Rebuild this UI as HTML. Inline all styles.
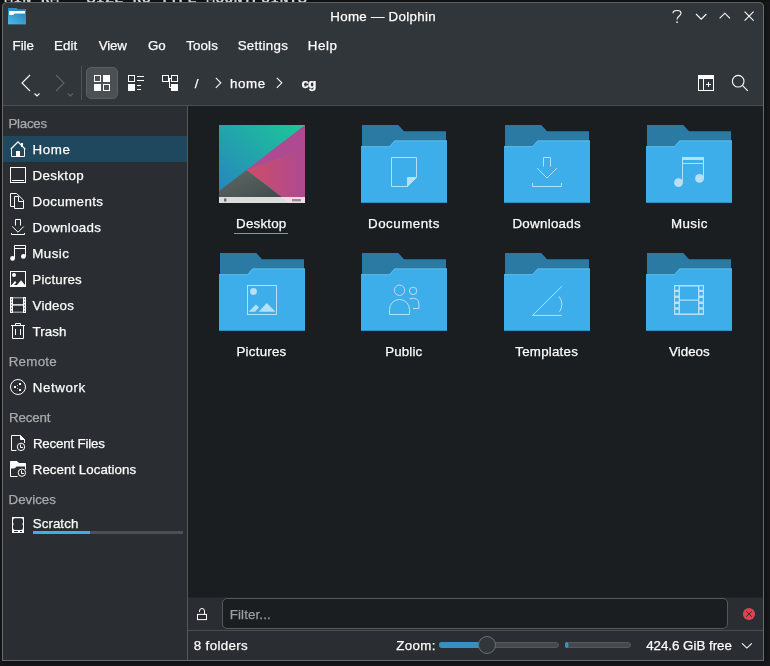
<!DOCTYPE html>
<html>
<head>
<meta charset="utf-8">
<title>Home — Dolphin</title>
<style>
html,body{margin:0;padding:0;}
body{width:770px;height:666px;overflow:hidden;background:#17191a;position:relative;font-family:"Liberation Sans",sans-serif;font-size:13.33px;color:#fcfcfc;}
.abs{position:absolute;}
.t,.lbl{-webkit-text-stroke:0.25px currentColor;}
.t{position:absolute;white-space:nowrap;line-height:16px;height:16px;margin-top:1px;}
#term{position:absolute;left:0;top:0;width:770px;height:2px;overflow:hidden;background:#131516;will-change:transform;}
#term span{position:absolute;left:4px;top:-9.4px;font-family:"Liberation Mono",monospace;font-size:15.3px;line-height:16px;color:#ffffff;font-weight:bold;white-space:pre;}
#win{position:absolute;left:2px;top:2px;width:762px;height:659px;background:#2a2e32;border-radius:5px 5px 0 0;box-shadow:0 1px 8px 1px rgba(0,0,0,0.45);overflow:hidden;}
#frame{position:absolute;left:2px;top:2px;width:760px;height:657px;border:1px solid #676b6f;border-top-color:#5a5f64;border-radius:5px 5px 0 0;pointer-events:none;}
#header{position:absolute;left:0;top:0;width:762px;height:103px;background:#31363b;}
#hsep{position:absolute;left:0;top:103px;width:762px;height:1px;background:#4a4e52;}
#side{position:absolute;left:1px;top:104px;width:184px;height:555px;background:#2a2e32;}
#vsep{position:absolute;left:185px;top:104px;width:1px;height:555px;background:#54585c;}
#view{position:absolute;left:186px;top:104px;width:576px;height:491px;background:#1b1e20;border-bottom:1px solid #222528;}
#fbar{position:absolute;left:186px;top:596px;width:576px;height:32px;background:#2a2e32;}
#ssep{position:absolute;left:186px;top:628px;width:576px;height:1px;background:#4a4e52;}
.menu{top:35px;}
.dim{color:#a8aaab;}
.row{position:absolute;left:1px;width:184px;height:26px;}
.lbl{position:absolute;white-space:nowrap;line-height:16px;height:16px;text-align:center;width:140px;margin-top:1px;}
svg{position:absolute;overflow:visible;}
</style>
</head>
<body>
<div id="term"><span>MIN RM   SIZE RO TYPE MOUNTPOINTS</span></div>
<div id="win">
  <div id="header"></div>
  <div id="hsep"></div>
  <div id="side"></div>
  <div id="vsep"></div>
  <div id="view"></div>
  <div id="fbar"></div>
  <div id="ssep"></div>
</div>
<div id="frame"></div>

<!-- coordinates below are absolute page coords -->
<div id="ui" class="abs" style="left:0;top:0;width:770px;height:666px;will-change:transform;">

<!-- titlebar -->
<svg style="left:8px;top:7.7px" width="18" height="17" viewBox="0 0 18 17">
  <defs><linearGradient id="fg" x1="0" y1="1" x2="1" y2="0.2"><stop offset="0" stop-color="#50b8ea"/><stop offset="1" stop-color="#2f8cc0"/></linearGradient></defs>
  <path d="M0 0 H8.6 L9.8 1.2 H18 V16.3 H0 Z" fill="#2d8ec4"/>
  <path d="M1.1 2.9 H17 V5.8 H6.5 L5.4 7.2 H1.1 Z" fill="#fcfcfc"/>
  <path d="M0 7 H5.6 L6.6 5.7 H18 V16.3 H0 Z" fill="url(#fg)"/>
</svg>
<div class="t" style="left:330.3px;top:8px;letter-spacing:0.29px;">Home — Dolphin</div>
<svg style="left:668px;top:7px" width="92" height="18" viewBox="668 7 92 18" fill="none" stroke="#fcfcfc" stroke-width="1.1">
  <path d="M673 13.3 C673 9.6 681 9.6 681 13.3 C681 16 677 16 677 19.6"/>
  <rect x="676.3" y="21.4" width="1.5" height="1.5" fill="#fcfcfc" stroke="none"/>
  <path d="M696 14 L701.2 19.2 L706.4 14"/>
  <path d="M719.6 18.4 L724.8 13.2 L730 18.4"/>
  <path d="M744.6 11.6 L753.6 20.6 M753.6 11.6 L744.6 20.6"/>
</svg>

<!-- menubar -->
<div class="t menu" style="left:12.6px;top:37px;letter-spacing:-0.06px;">File</div>
<div class="t menu" style="left:54.1px;top:37px;letter-spacing:0.02px;">Edit</div>
<div class="t menu" style="left:98.7px;top:37px;letter-spacing:-0.12px;">View</div>
<div class="t menu" style="left:148.0px;top:37px;letter-spacing:-0.17px;">Go</div>
<div class="t menu" style="left:186.2px;top:37px;letter-spacing:0.13px;">Tools</div>
<div class="t menu" style="left:237.7px;top:37px;letter-spacing:0.28px;">Settings</div>
<div class="t menu" style="left:307.8px;top:37px;letter-spacing:0.57px;">Help</div>

<!-- toolbar -->
<svg style="left:0;top:60px" width="770" height="46" viewBox="0 60 770 46" fill="none">
  <path d="M30 75 L22 83 L30 91" stroke="#fcfcfc" stroke-width="1.1"/>
  <path d="M34.5 93.5 L37 96 L39.5 93.5" stroke="#fcfcfc" stroke-width="1.1"/>
  <path d="M56 75 L64 83 L56 91" stroke="#5f6469" stroke-width="1.1"/>
  <path d="M68 93.5 L70.5 96 L73 93.5" stroke="#5f6469" stroke-width="1.1"/>
  <rect x="81" y="66" width="1" height="34" fill="#4d5257"/>
  <rect x="86.5" y="67.5" width="31" height="31" rx="4.5" fill="#4b5055" stroke="#5b6065"/>
  <!-- icons grid -->
  <g fill="#fcfcfc">
    <path d="M94 75h7v7h-7z M95 76v5h5v-5z" fill-rule="evenodd"/>
    <rect x="103" y="75" width="7" height="7"/>
    <rect x="94" y="84" width="7" height="7"/>
    <path d="M103 84h7v7h-7z M104 85v5h5v-5z" fill-rule="evenodd"/>
  </g>
  <!-- compact -->
  <g fill="#fcfcfc">
    <path d="M128 75h7v7h-7z M129 76v5h5v-5z" fill-rule="evenodd"/>
    <rect x="128" y="84" width="7" height="7"/>
    <rect x="137" y="76" width="7" height="1"/>
    <rect x="137" y="80" width="7" height="1"/>
    <rect x="137" y="85" width="4" height="1"/>
    <rect x="137" y="89" width="4" height="1"/>
  </g>
  <!-- tree -->
  <g fill="#fcfcfc">
    <path d="M162 75h7v7h-7z M163 76v5h5v-5z" fill-rule="evenodd"/>
    <path d="M171 75h7v7h-7z M172 76v5h5v-5z" fill-rule="evenodd"/>
    <rect x="171" y="84" width="7" height="7"/>
    <rect x="169" y="78" width="2" height="1"/>
    <rect x="169" y="78" width="1" height="10"/>
    <rect x="169" y="87" width="2" height="1"/>
  </g>
  <!-- breadcrumb arrows -->
  <path d="M215.8 77.8 L220.8 82.8 L215.8 87.8" stroke="#fcfcfc" stroke-width="1.1"/>
  <path d="M276.8 77.8 L281.8 82.8 L276.8 87.8" stroke="#fcfcfc" stroke-width="1.1"/>
  <!-- split view -->
  <g fill="#fcfcfc">
    <path d="M698 75h16v16h-16z M699 79v11h4v-11z M704 79v11h9v-11z" fill-rule="evenodd"/>
    <rect x="708" y="82" width="1" height="5"/>
    <rect x="706" y="84" width="5" height="1"/>
  </g>
  <!-- search -->
  <circle cx="738.2" cy="81.2" r="5.8" stroke="#fcfcfc" stroke-width="1.1"/>
  <path d="M742.6 85.6 L747.8 90.8" stroke="#fcfcfc" stroke-width="1.1"/>
</svg>
<div class="t" style="left:194.8px;top:75px;letter-spacing:0.80px;">/</div>
<div class="t" style="left:230.0px;top:75px;letter-spacing:0.60px;">home</div>
<div class="t" style="left:301.5px;top:75px;font-weight:bold;letter-spacing:-0.59px;">cg</div>

<!-- SIDEBAR -->
<div class="abs" style="left:3px;top:136px;width:184px;height:26px;background:#1f485e;"></div>
<div class="t dim" style="left:8.4px;top:115px;letter-spacing:-0.24px;">Places</div>
<div class="t" style="left:32.4px;top:141px;letter-spacing:0.67px;">Home</div>
<div class="t" style="left:32.4px;top:167px;letter-spacing:0.39px;">Desktop</div>
<div class="t" style="left:32.4px;top:193px;letter-spacing:0.40px;">Documents</div>
<div class="t" style="left:32.5px;top:219px;letter-spacing:0.32px;">Downloads</div>
<div class="t" style="left:32.3px;top:245px;letter-spacing:0.44px;">Music</div>
<div class="t" style="left:32.3px;top:271px;letter-spacing:0.19px;">Pictures</div>
<div class="t" style="left:32.6px;top:297px;letter-spacing:0.14px;">Videos</div>
<div class="t" style="left:32.5px;top:323px;letter-spacing:0.06px;">Trash</div>
<div class="t dim" style="left:8.7px;top:353px;letter-spacing:0.28px;">Remote</div>
<div class="t" style="left:32.8px;top:379px;letter-spacing:0.58px;">Network</div>
<div class="t dim" style="left:9.0px;top:409px;letter-spacing:-0.14px;">Recent</div>
<div class="t" style="left:32.9px;top:435px;letter-spacing:-0.19px;">Recent Files</div>
<div class="t" style="left:32.8px;top:461px;letter-spacing:0.02px;">Recent Locations</div>
<div class="t dim" style="left:8.6px;top:491px;letter-spacing:-0.02px;">Devices</div>
<div class="t" style="left:32.7px;top:515px;letter-spacing:0.07px;">Scratch</div>
<div class="abs" style="left:33px;top:531px;width:150px;height:3px;background:#4b5055;"></div>
<div class="abs" style="left:33px;top:531px;width:57px;height:3px;background:#3daee9;"></div>

<!-- sidebar icons -->
<svg id="sicons" style="left:10px;top:141px" width="16" height="400" viewBox="0 0 16 400" fill="none" stroke="#fcfcfc" stroke-width="1">
  <!-- home (0) -->
  <g>
    <path d="M0.7 8.2 L8 0.9 L15.3 8.2" stroke-width="1.3"/>
    <path d="M1.5 7.5 V15.5 H14.5 V7.5"/>
    <rect x="6" y="10" width="4" height="5.5" fill="#fcfcfc" stroke="none"/>
    <rect x="11" y="2" width="2" height="4" fill="#fcfcfc" stroke="none"/>
  </g>
  <!-- desktop (26) -->
  <g transform="translate(0,26)">
    <rect x="0.5" y="0.5" width="15" height="15"/>
    <path d="M2 13.5 H14"/>
  </g>
  <!-- documents (52) -->
  <g transform="translate(0,52)">
    <path d="M4.5 13.5 H0.5 V0.5 H6.5 L13.5 7.2 V15.5 H4.5 V3.5 H8.5 V8.5 H13.5"/>
  </g>
  <!-- downloads (78) -->
  <g transform="translate(0,78)">
    <path d="M5.5 6.5 V0.5 H10.5 V6.5"/>
    <path d="M2.3 7.5 L8 13.2 L13.7 7.5"/>
    <path d="M1.5 14 V15.5 H14.5 V14"/>
  </g>
  <!-- music (104) -->
  <g transform="translate(0,104)">
    <path d="M4.5 13 V0.5 H15.5 V11"/>
    <path d="M4.5 3.5 H15.5"/>
    <circle cx="2.6" cy="13.4" r="2.4" fill="#fcfcfc" stroke="none"/>
    <circle cx="13.4" cy="11.4" r="2.4" fill="#fcfcfc" stroke="none"/>
  </g>
  <!-- pictures (130) -->
  <g transform="translate(0,130)">
    <rect x="0.5" y="0.5" width="15" height="15"/>
    <circle cx="4" cy="4" r="2" fill="#fcfcfc" stroke="none"/>
    <path d="M7 14 L11 9.2 L15 14 Z" fill="#fcfcfc" stroke="none"/>
    <path d="M1.6 14 L5 10 L6.4 11.4 L4 14 Z" fill="#fcfcfc" stroke="none"/>
    <path d="M1 14.5 H15"/>
  </g>
  <!-- videos (156) -->
  <g transform="translate(0,156)">
    <rect x="0" y="0" width="3" height="16" fill="#fcfcfc" stroke="none"/>
    <rect x="13" y="0" width="3" height="16" fill="#fcfcfc" stroke="none"/>
    <rect x="3" y="0" width="10" height="1.5" fill="#8e9295" stroke="none"/>
    <rect x="3" y="14.5" width="10" height="1.5" fill="#8e9295" stroke="none"/>
    <rect x="3" y="7.2" width="10" height="1.4" fill="#fcfcfc" stroke="none"/>
    <g fill="#6f7376" stroke="none">
      <rect x="1" y="1.5" width="1" height="1.5"/><rect x="1" y="4.5" width="1" height="1.5"/><rect x="1" y="7.5" width="1" height="1.5"/><rect x="1" y="10.5" width="1" height="1.5"/><rect x="1" y="13.5" width="1" height="1.5"/>
      <rect x="14" y="1.5" width="1" height="1.5"/><rect x="14" y="4.5" width="1" height="1.5"/><rect x="14" y="7.5" width="1" height="1.5"/><rect x="14" y="10.5" width="1" height="1.5"/><rect x="14" y="13.5" width="1" height="1.5"/>
    </g>
  </g>
  <!-- trash (182) -->
  <g transform="translate(0,182)">
    <path d="M1 2.5 H15"/>
    <path d="M5.5 2.5 V0.5 H10.5 V2.5"/>
    <path d="M2.5 2.5 V15.5 H13.5 V2.5"/>
    <path d="M5.5 6 V12 M10.5 6 V12"/>
  </g>
  <!-- network (238) -->
  <g transform="translate(0,238)">
    <circle cx="8" cy="8" r="7.5"/>
    <g fill="#fcfcfc" stroke="none">
      <rect x="4" y="7" width="2" height="2"/><rect x="9" y="4" width="2" height="2"/><rect x="9" y="10" width="2" height="2"/>
      <rect x="7" y="6" width="1" height="1" opacity="0.7"/><rect x="7" y="9" width="1" height="1" opacity="0.7"/>
    </g>
  </g>
  <!-- recent files (294) -->
  <g transform="translate(0,294)">
    <path d="M6.5 15.5 H1.5 V0.5 H10.5 L14.5 4.5 V8"/>
    <path d="M10.5 0.5 V4.5 H14.5 Z" fill="#fcfcfc"/>
    <circle cx="11" cy="11.9" r="3.7"/>
    <path d="M10.5 9.6 V12.5 H13" stroke-width="1"/>
  </g>
  <!-- recent locations (320) -->
  <g transform="translate(0,320)">
    <path d="M0.5 0.5 H7 L9 2.5 H15.5 V5 H6.5 L4.5 7 H0.5 Z" fill="#fcfcfc"/>
    <path d="M0.5 6 V15.5 H7.5"/>
    <path d="M15.5 4 V8.5"/>
    <circle cx="11.9" cy="11.7" r="3.7"/>
    <path d="M11.5 9.4 V12.5 H14" stroke-width="1"/>
  </g>
  <!-- scratch (376) -->
  <g transform="translate(0,376)">
    <rect x="2" y="0" width="12" height="16" fill="#fcfcfc" stroke="none"/>
    <path d="M5 1.3 H11 Q13 1.3 13 3.5 V5.8 L12.5 6.5 V7.8 L13 8.5 V10.5 Q13 13 11 13 H5 Q3 13 3 10.5 V8.5 L3.5 7.8 V6.5 L3 5.8 V3.5 Q3 1.3 5 1.3 Z" fill="#2a2e32" stroke="none"/>
    <rect x="4" y="14" width="4" height="1" fill="#2a2e32" stroke="none"/>
    <rect x="10" y="14" width="2" height="1" fill="#2a2e32" stroke="none"/>
  </g>
</svg>

<!-- MAIN VIEW: folders -->
<svg id="folders" style="left:0;top:0" width="770" height="666" viewBox="0 0 770 666">
  <defs>
    <g id="folder">
      <path d="M1 0 H37.3 L43 6.2 H85 V78 H1 Z" fill="#2b7aa3"/>
      <path d="M0 21.2 H28.3 L33.5 15.4 H86 V78 H0 Z" fill="#3daee9"/>
      <path d="M0 21.7 H28.5 L33.7 15.9 H86" fill="none" stroke="#6cc3ef" stroke-width="1" opacity="0.7"/>
      <rect x="0" y="77" width="86" height="1" fill="#2f8fc2"/>
    </g>
    <linearGradient id="teal" x1="0" y1="1" x2="1" y2="0"><stop offset="0" stop-color="#2780c4"/><stop offset="0.5" stop-color="#22a4ab"/><stop offset="1" stop-color="#1cc898"/></linearGradient>
    <linearGradient id="pink" x1="0" y1="0" x2="1" y2="0"><stop offset="0" stop-color="#cf4c66"/><stop offset="1" stop-color="#ad4a92"/></linearGradient>
    <linearGradient id="gray" x1="0" y1="0" x2="1" y2="1"><stop offset="0" stop-color="#5e6b68"/><stop offset="1" stop-color="#414a4a"/></linearGradient>
  </defs>
  <!-- desktop thumb -->
  <g transform="translate(219,125)">
    <rect x="0" y="0" width="86" height="78" fill="url(#teal)"/>
    <path d="M86 0 L86 24 L27.5 45 Z" fill="#ae4a91"/>
    <path d="M27.5 45 L86 23.4 V78 H62.6 V72 Z" fill="url(#pink)"/>
    <path d="M0 66 L27.5 45 L62.6 72 H0 Z" fill="url(#gray)"/>
    <rect x="0" y="72" width="86" height="6" fill="#d9dddc"/>
    <path d="M62.6 72 L70 78 H86 V72 Z" fill="#f1dde7"/>
    <rect x="5" y="73.5" width="2.5" height="3" fill="#6a6e70"/>
    <rect x="73" y="74" width="9" height="2.4" fill="#9a8e96"/>
  </g>
  <use href="#folder" x="361" y="125"/>
  <use href="#folder" x="504" y="125"/>
  <use href="#folder" x="646" y="125"/>
  <use href="#folder" x="219" y="253"/>
  <use href="#folder" x="361" y="253"/>
  <use href="#folder" x="504" y="253"/>
  <use href="#folder" x="646" y="253"/>
  <g fill="none" stroke="#b7dff6" stroke-width="1">
    <!-- documents emblem -->
    <path d="M391.5 157.5 H416.5 V177 L407.5 186.5 H391.5 Z"/>
    <path d="M416.5 177.5 H407.5 V186.5 Z" fill="#b7dff6"/>
    <!-- downloads emblem -->
    <path d="M543.5 166.5 V157.5 H550.5 V166.5"/>
    <path d="M537 168 L547 178 L557 168"/>
    <path d="M532.5 183 V186.5 H561.5 V183"/>
    <!-- music emblem -->
    <path d="M682.5 182 V157.5 H703.5 V178"/>
    <rect x="682" y="157" width="22" height="3" fill="#b7dff6" stroke="none"/>
    <path d="M682.5 163.5 H703.5"/>
    <circle cx="678.5" cy="182.6" r="4.4" fill="#b7dff6" stroke="none"/>
    <circle cx="699.5" cy="178.4" r="4.4" fill="#b7dff6" stroke="none"/>
    <!-- pictures emblem -->
    <rect x="247.5" y="285.5" width="29" height="29"/>
    <circle cx="253.5" cy="291.5" r="3.4" fill="#b7dff6" stroke="none"/>
    <path d="M248.8 311.8 L255.9 304.4 L259 307.5 L255.2 311.8 Z" fill="#b7dff6" stroke="none"/>
    <path d="M258.6 311.8 L266.8 303 L275.5 311.8 Z" fill="#b7dff6" stroke="none"/>
    <!-- public emblem -->
    <circle cx="399.5" cy="290.3" r="5.2"/>
    <path d="M389.5 314.5 V309.5 A10 10 0 0 1 409.5 309.5 V314.5 Z"/>
    <circle cx="413.1" cy="290.9" r="3.7"/>
    <path d="M409.4 298.8 Q418.9 296.5 418.9 304 V308.5 H413"/>
    <!-- templates emblem -->
    <path d="M562 286.2 L532.5 315.4 H562"/>
    <path d="M559 296.3 Q564.5 304 559.5 311.8"/>
    <!-- videos emblem -->
    <g stroke="none" fill="#b7dff6">
      <path fill-rule="evenodd" d="M674 285 h30 v30 h-30 z M680 286.5 v13 h18 v-13 z M680 300.8 v12.7 h18 v-12.7 z
        M675.2 286.3 h3.4 v3.4 h-3.4z M675.2 292.1 h3.4 v3.4 h-3.4z M675.2 298.0 h3.4 v3.4 h-3.4z M675.2 303.9 h3.4 v3.4 h-3.4z M675.2 309.8 h3.4 v3.4 h-3.4z
        M699.4 286.3 h3.4 v3.4 h-3.4z M699.4 292.1 h3.4 v3.4 h-3.4z M699.4 298.0 h3.4 v3.4 h-3.4z M699.4 303.9 h3.4 v3.4 h-3.4z M699.4 309.8 h3.4 v3.4 h-3.4z"/>
    </g>
  </g>
</svg>
<div class="lbl" style="left:191.3px;top:215px;letter-spacing:0.21px;">Desktop</div>
<div class="abs" style="left:234px;top:232.7px;width:54px;height:1.3px;background:#3daee9;"></div>
<div class="lbl" style="left:334.0px;top:215px;letter-spacing:0.49px;">Documents</div>
<div class="lbl" style="left:476.7px;top:215px;letter-spacing:0.28px;">Downloads</div>
<div class="lbl" style="left:619.4px;top:215px;letter-spacing:0.36px;">Music</div>
<div class="lbl" style="left:191.5px;top:343px;letter-spacing:0.23px;">Pictures</div>
<div class="lbl" style="left:333.8px;top:343px;letter-spacing:0.10px;">Public</div>
<div class="lbl" style="left:476.7px;top:343px;letter-spacing:0.23px;">Templates</div>
<div class="lbl" style="left:619.4px;top:343px;letter-spacing:0.05px;">Videos</div>

<!-- filter bar -->
<div class="abs" style="left:222px;top:598px;width:506px;height:31px;box-sizing:border-box;border:1px solid #55595d;border-radius:5px;background:#1b1e20;"></div>
<div class="t" style="left:229.7px;top:606px;color:#9a9ea2;letter-spacing:0.13px;">Filter...</div>
<svg style="left:190px;top:602px" width="24" height="24" viewBox="190 602 24 24" fill="none" stroke="#fcfcfc" stroke-width="1">
  <rect x="197.5" y="614.4" width="9" height="5.2"/>
  <path d="M199.5 612 V611 A2.5 2.5 0 0 1 204.5 611 V614.5"/>
</svg>
<svg style="left:742px;top:607px" width="14" height="14" viewBox="0 0 14 14">
  <circle cx="7" cy="7" r="6.1" fill="#da4453"/>
  <path d="M4.2 4.2 L9.8 9.8 M9.8 4.2 L4.2 9.8" stroke="#2a2e32" stroke-width="1" fill="none"/>
</svg>

<!-- status bar -->
<div class="t" style="left:193.8px;top:637px;letter-spacing:0.34px;">8 folders</div>
<div class="t" style="left:396.2px;top:637px;letter-spacing:0.36px;">Zoom:</div>
<div class="t" style="left:646.2px;top:637px;letter-spacing:-0.02px;">424.6 GiB free</div>
<svg style="left:430px;top:632px" width="330" height="28" viewBox="430 632 330 28" fill="none">
  <rect x="439.5" y="642.5" width="119" height="5" rx="2.5" fill="#45494d" stroke="#54585c"/>
  <rect x="439" y="642" width="48" height="6" rx="3" fill="#3a8ec0"/>
  <circle cx="487" cy="645" r="8.5" fill="#31363b" stroke="#6b6f73"/>
  <rect x="565.5" y="642.5" width="65" height="5" rx="2.5" fill="#45494d" stroke="#54585c"/>
  <rect x="565" y="642" width="3.4" height="6" rx="1.7" fill="#3a8ec0"/>
  <path d="M742 643.3 L746.9 648.1 L751.8 643.3" stroke="#fcfcfc" stroke-width="1.1"/>
</svg>

</div>
</body>
</html>
